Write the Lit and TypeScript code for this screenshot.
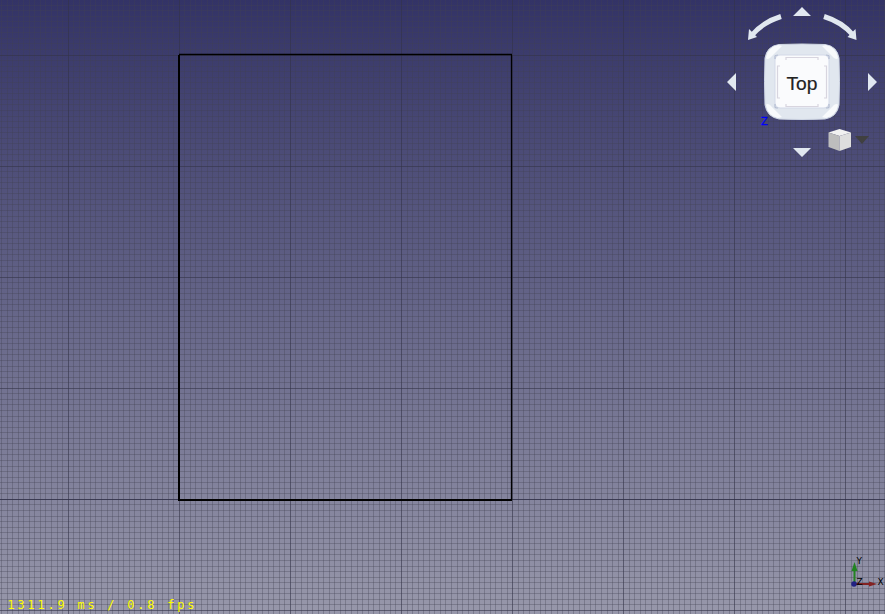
import { LitElement, html, svg, css } from "lit";
import { customElement } from "lit/decorators.js";

const STEP = 111.1 / 20;
const lines = (origin: number, limit: number) => {
  const out: { p: number; major: boolean }[] = [];
  for (let i = -110; i < 170; i++) {
    const p = Math.floor(origin + i * STEP) + 0.5;
    if (p >= 0 && p <= limit) out.push({ p, major: i % 20 === 0 });
  }
  return out;
};
const path = (major: boolean) =>
  lines(179.3, 885).filter((l) => l.major === major).map((l) => `M${l.p} 0V614`).join("") +
  lines(499.4, 614).filter((l) => l.major === major).map((l) => `M0 ${l.p}H885`).join("");

@customElement("nav-cube")
class NavCube extends LitElement {
  static styles = css`
    :host { display: block; width: 165px; height: 170px; }
    svg { display: block; }
    .arrow { fill: #e1e8f0; }
    .curve { fill: none; stroke: #e1e8f0; stroke-width: 5; }
    .label { font: 19px "Liberation Sans", sans-serif; fill: #222; stroke: #222; stroke-width: 0.2; }
    .axis { font: 10px "DejaVu Sans", sans-serif; fill: #00f; stroke: #00f; stroke-width: 0.3; }
  `;
  render() {
    return html`<svg width="165" height="170" viewBox="0 0 165 170">
      <path class="arrow" d="M82 7L91 16H73ZM82 157L91 148H73ZM7 82L16 73V91ZM157 82L148 73V91Z"/>
      <path class="curve" d="M61 16.5Q43 22 32 35M104 16.5Q122 22 133 35"/>
      <path class="arrow" d="M28 40L29 29L37 37ZM136.500 40L135.500 29L127.500 37Z"/>
      <path d="M59 44.500Q82 43.500 105 44.500Q117 46 119 58Q120 82 119 105Q117 117 105 119Q82 120 59 119Q47 117 45 105Q44 82 45 58Q47 46 59 44.500Z" fill="#e1e7ef" stroke="#d0d7e5"/>
      <path d="M46 58Q48 47 58 45L62 46L50 58Q47 60 46 58ZM118 58Q116 47 106 45L102 46L114 58Q117 60 118 58ZM46 105Q48 116 58 118L62 117L50 105Q47 103 46 105ZM118 105Q116 116 106 118L102 117L114 105Q117 103 118 105Z" fill="#f8fafc"/>
      <rect x="55" y="55" width="54" height="53" rx="5" fill="#fafbfd" stroke="#d3d9e8"/>
      <path d="M55 59V56Q55 55 58 55M109 59V56Q109 55 106 55M55 104V107Q55 108 58 108M109 104V107Q109 108 106 108" fill="none" stroke="#b4bdd2" stroke-width="1.200"/>
      <path d="M66 60V57.500H98V60M66 104V106.500H98V104M60 66H57.500V98H60M104 66H106.500V98H104" fill="none" stroke="#d8d5df" stroke-width="1.200"/>
      <text class="label" x="66.500" y="90" textLength="31" lengthAdjust="spacingAndGlyphs">Top</text>
      <text class="axis" x="41" y="125">Z</text>
      <path d="M108.500 132.500L119.500 129L131 132.500L119.500 136Z" fill="#f1f1f1"/>
      <path d="M108.500 132.500L119.500 136V151L108.500 147Z" fill="#bdbdbd"/>
      <path d="M131 132.500L119.500 136V151L131 147Z" fill="#dedede"/>
      <path d="M135 136H149L142 144Z" fill="#404040"/>
    </svg>`;
  }
}

@customElement("app-root")
class AppRoot extends LitElement {
  static styles = css`
    :host { display: block; position: relative; width: 885px; height: 614px; overflow: hidden;
      background: linear-gradient(#333366, #9797aa); }
    .scene { display: block; }
    .minor { stroke: #404050; stroke-opacity: 0.32; }
    .major { stroke: #343447; stroke-opacity: 0.6; }
    .base { stroke: #2c2c44; stroke-opacity: 0.6; }
    .wire { fill: none; stroke: #000; stroke-width: 2; }
    nav-cube { position: absolute; left: 720px; top: 0; }
    .stats { font: 12px "DejaVu Sans Mono", monospace; fill: #ff0; }
    .axis { font: 9px "DejaVu Sans", sans-serif; fill: #000; }
  `;
  render() {
    return html`
      <svg class="scene" width="885" height="614" viewBox="0 0 885 614">
        <path class="minor" d=${path(false)} />
        <path class="major" d=${path(true)} />
        <path class="base" d="M0 499.500H885" />
        <path d="M179 54.500H512M511.500 55V500" fill="none" stroke="#000" stroke-width="1.300"/>
        <path class="wire" d="M179 55V500M178 500H512"/>
        <text class="stats" x="7.500" y="609" textLength="187">1311.9 ms / 0.8 fps</text>
        ${svg`<path d="M854.500 583V569" stroke="#228322" stroke-width="2"/>
        <path d="M851.500 571L854.500 562L857.500 571Z" fill="#228322"/>
        <path d="M856 584H870" stroke="#832222" stroke-width="2"/>
        <path d="M869 581.500L877 584L869 586.500Z" fill="#832222"/>
        <circle cx="854" cy="584" r="2.800" fill="#222283"/>`}
        <text class="axis" x="856.500" y="564">Y</text>
        <text class="axis" x="856.500" y="585">Z</text>
        <text class="axis" x="877.500" y="585">X</text>
      </svg>
      <nav-cube></nav-cube>`;
  }
}
